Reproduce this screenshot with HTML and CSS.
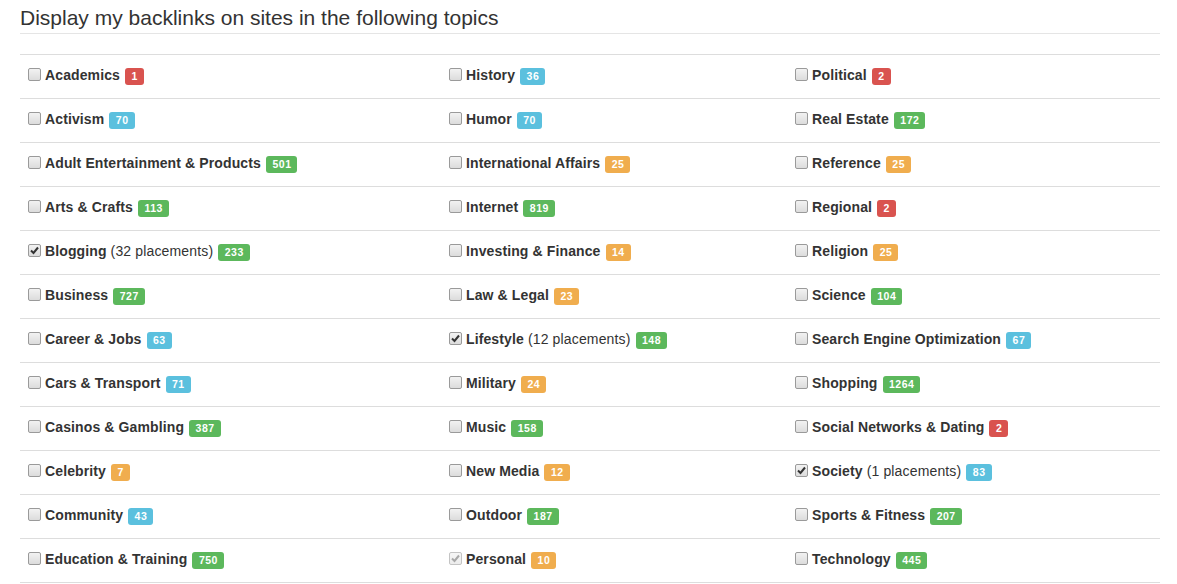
FILE: index.html
```html
<!DOCTYPE html>
<html>
<head>
<meta charset="utf-8">
<link rel="stylesheet" href="styles.css">
</head>
<body>
<div class="wrap">
  <h1 class="legend">Display my backlinks on sites in the following topics</h1>
  <div class="grid">
    <div class="cell"><span class="cb"></span><b>Academics</b><span class="lbl red">1</span></div>
    <div class="cell"><span class="cb"></span><b>History</b><span class="lbl blue">36</span></div>
    <div class="cell"><span class="cb"></span><b>Political</b><span class="lbl red">2</span></div>

    <div class="cell"><span class="cb"></span><b>Activism</b><span class="lbl blue">70</span></div>
    <div class="cell"><span class="cb"></span><b>Humor</b><span class="lbl blue">70</span></div>
    <div class="cell"><span class="cb"></span><b>Real Estate</b><span class="lbl green">172</span></div>

    <div class="cell"><span class="cb"></span><b>Adult Entertainment &amp; Products</b><span class="lbl green">501</span></div>
    <div class="cell"><span class="cb"></span><b>International Affairs</b><span class="lbl orange">25</span></div>
    <div class="cell"><span class="cb"></span><b>Reference</b><span class="lbl orange">25</span></div>

    <div class="cell"><span class="cb"></span><b>Arts &amp; Crafts</b><span class="lbl green">113</span></div>
    <div class="cell"><span class="cb"></span><b>Internet</b><span class="lbl green">819</span></div>
    <div class="cell"><span class="cb"></span><b>Regional</b><span class="lbl red">2</span></div>

    <div class="cell"><span class="cb checked"><svg viewBox="0 0 13 13" width="13" height="13"><path d="M3 6.5 L5.5 9 L10 3.5" fill="none" stroke="#333" stroke-width="2"/></svg></span><b>Blogging</b><span class="pl">(32 placements)</span><span class="lbl green">233</span></div>
    <div class="cell"><span class="cb"></span><b>Investing &amp; Finance</b><span class="lbl orange">14</span></div>
    <div class="cell"><span class="cb"></span><b>Religion</b><span class="lbl orange">25</span></div>

    <div class="cell"><span class="cb"></span><b>Business</b><span class="lbl green">727</span></div>
    <div class="cell"><span class="cb"></span><b>Law &amp; Legal</b><span class="lbl orange">23</span></div>
    <div class="cell"><span class="cb"></span><b>Science</b><span class="lbl green">104</span></div>

    <div class="cell"><span class="cb"></span><b>Career &amp; Jobs</b><span class="lbl blue">63</span></div>
    <div class="cell"><span class="cb checked"><svg viewBox="0 0 13 13" width="13" height="13"><path d="M3 6.5 L5.5 9 L10 3.5" fill="none" stroke="#333" stroke-width="2"/></svg></span><b>Lifestyle</b><span class="pl">(12 placements)</span><span class="lbl green">148</span></div>
    <div class="cell"><span class="cb"></span><b>Search Engine Optimization</b><span class="lbl blue">67</span></div>

    <div class="cell"><span class="cb"></span><b>Cars &amp; Transport</b><span class="lbl blue">71</span></div>
    <div class="cell"><span class="cb"></span><b>Military</b><span class="lbl orange">24</span></div>
    <div class="cell"><span class="cb"></span><b>Shopping</b><span class="lbl green">1264</span></div>

    <div class="cell"><span class="cb"></span><b>Casinos &amp; Gambling</b><span class="lbl green">387</span></div>
    <div class="cell"><span class="cb"></span><b>Music</b><span class="lbl green">158</span></div>
    <div class="cell"><span class="cb"></span><b>Social Networks &amp; Dating</b><span class="lbl red">2</span></div>

    <div class="cell"><span class="cb"></span><b>Celebrity</b><span class="lbl orange">7</span></div>
    <div class="cell"><span class="cb"></span><b>New Media</b><span class="lbl orange">12</span></div>
    <div class="cell"><span class="cb checked"><svg viewBox="0 0 13 13" width="13" height="13"><path d="M3 6.5 L5.5 9 L10 3.5" fill="none" stroke="#333" stroke-width="2"/></svg></span><b>Society</b><span class="pl">(1 placements)</span><span class="lbl blue">83</span></div>

    <div class="cell"><span class="cb"></span><b>Community</b><span class="lbl blue">43</span></div>
    <div class="cell"><span class="cb"></span><b>Outdoor</b><span class="lbl green">187</span></div>
    <div class="cell"><span class="cb"></span><b>Sports &amp; Fitness</b><span class="lbl green">207</span></div>

    <div class="cell"><span class="cb"></span><b>Education &amp; Training</b><span class="lbl green">750</span></div>
    <div class="cell"><span class="cb checked disabled"><svg viewBox="0 0 13 13" width="13" height="13"><path d="M3 6.5 L5.5 9 L10 3.5" fill="none" stroke="#a8a8a8" stroke-width="2"/></svg></span><b>Personal</b><span class="lbl orange">10</span></div>
    <div class="cell"><span class="cb"></span><b>Technology</b><span class="lbl green">445</span></div>
  </div>
</div>
</body>
</html>
```

FILE: styles.css
```css
html, body {
  margin: 0;
  padding: 0;
  background: #fff;
}
body {
  font-family: "Liberation Sans", Arial, Helvetica, sans-serif;
  font-size: 14px;
  line-height: 20px;
  color: #333;
}
.wrap {
  width: 1140px;
  padding-left: 20px;
}
.legend {
  margin: 0 0 20px 0;
  padding-top: 3px;
  font-size: 21px;
  font-weight: normal;
  line-height: 30px;
  color: #333;
  border-bottom: 1px solid #e5e5e5;
}
.grid {
  display: grid;
  grid-template-columns: 421px 346px 373px;
  border-bottom: 1px solid #ddd;
}
.cell {
  box-sizing: border-box;
  height: 44px;
  border-top: 1px solid #ddd;
  padding: 0 0 3px 8px;
  display: flex;
  align-items: center;
  white-space: nowrap;
}
.cell b {
  font-weight: bold;
  letter-spacing: 0.12px;
}
.cb {
  box-sizing: border-box;
  width: 13px;
  height: 13px;
  margin: -2px 4px 0 0;
  border: 1px solid #9a9a9a;
  border-radius: 2px;
  background: linear-gradient(#f2f2f2, #dcdcdc);
  flex: none;
  position: relative;
}
.cb svg {
  position: absolute;
  left: -1px;
  top: -1px;
}
.cb.disabled {
  border-color: #c4c4c4;
  background: linear-gradient(#f6f6f6, #ececec);
}
.pl {
  margin-left: 4px;
  font-weight: normal;
  letter-spacing: 0.15px;
}
.lbl {
  display: inline-block;
  margin-left: 5px;
  margin-top: 3px;
  padding: 3px 6px 3px 6.5px;
  font-size: 10.5px;
  font-weight: bold;
  line-height: 11px;
  letter-spacing: 0.5px;
  color: #fff;
  border-radius: 3px;
}
.red { background: #d9534f; }
.blue { background: #5bc0de; }
.green { background: #5cb85c; }
.orange { background: #f0ad4e; }
```
